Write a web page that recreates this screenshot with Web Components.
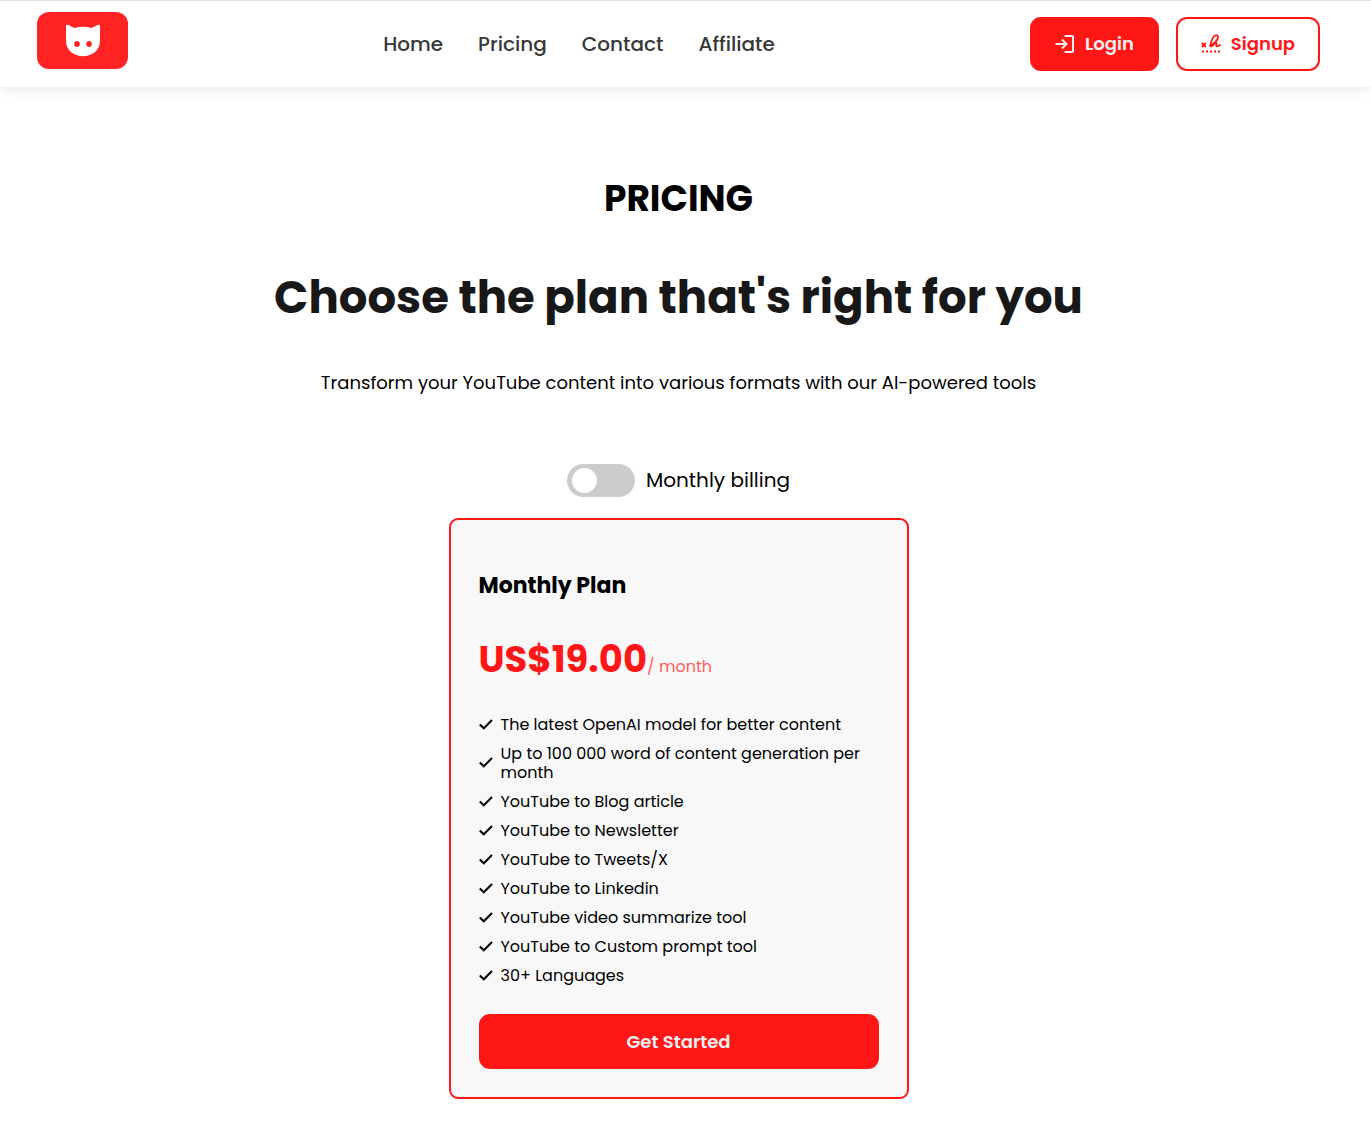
<!DOCTYPE html>
<html lang="en">
<head>
<meta charset="utf-8">
<title>Pricing</title>
<style>
  body {
    margin: 0;
    background: #fff;
    color: #000;
    font-family: Poppins, Inter, "Open Sans", sans-serif;
    --accent: #ff1717;
    --on-accent: #f0f0f0;
  }
</style>
</head>
<body>
<site-header>
  <nav-link href="#home">Home</nav-link>
  <nav-link href="#pricing">Pricing</nav-link>
  <nav-link href="#contact">Contact</nav-link>
  <nav-link href="#affiliate">Affiliate</nav-link>
  <action-button slot="actions" icon="login">Login</action-button>
  <action-button slot="actions" icon="sign" outline>Signup</action-button>
</site-header>
<pricing-section>
  <span slot="eyebrow">PRICING</span>
  <span slot="title">Choose the plan that's right for you</span>
  <span slot="lead">Transform your YouTube content into various formats with our AI-powered tools</span>
  <billing-toggle>Monthly billing</billing-toggle>
  <plan-card>
    <span slot="name">Monthly Plan</span>
    <span slot="price">US$19.00</span>
    <span slot="period">/ month</span>
    <plan-feature>The latest OpenAI model for better content</plan-feature>
    <plan-feature>Up to 100 000 word of content generation per month</plan-feature>
    <plan-feature>YouTube to Blog article</plan-feature>
    <plan-feature>YouTube to Newsletter</plan-feature>
    <plan-feature>YouTube to Tweets/X</plan-feature>
    <plan-feature>YouTube to Linkedin</plan-feature>
    <plan-feature>YouTube video summarize tool</plan-feature>
    <plan-feature>YouTube to Custom prompt tool</plan-feature>
    <plan-feature>30+ Languages</plan-feature>
    <action-button slot="action" block>Get Started</action-button>
  </plan-card>
</pricing-section>

<script>
  const define = (name, html) => customElements.define(name, class extends HTMLElement {
    constructor() {
      super();
      this.attachShadow({ mode: 'open' }).innerHTML = html;
    }
  });

  const icons = {
    login: '<svg width="20" height="20" viewBox="0 0 20 20" fill="none" stroke="currentColor" stroke-width="2" aria-hidden="true"><path d="M0.500 10h10.500M7 5.500l4.500 4.500L7 14.500"/><path d="M9.500 2h7.500q1 0 1 1v14q0 1-1 1H9.500"/></svg>',
    sign: '<svg width="20" height="20" viewBox="0 0 20 20" fill="none" stroke="currentColor" stroke-width="1.800" aria-hidden="true"><path d="M.8 9l4 4M4.800 9l-4 4"/><path d="M8 12C13 10.500 17.300 5.500 17 3C16.500 0 13 1 11.300 5C9.800 8.500 8.800 12 10.300 12.300C12 12.600 14 8.500 15.300 8.900C16.500 9.300 14.300 12.300 15.800 12.400C17 12.500 17.500 11.200 19.800 11.200"/><path d="M1 17.500h18" stroke-width="2" stroke-dasharray="2 2"/></svg>'
  };

  class ActionButton extends HTMLElement {
    constructor() {
      super();
      this.attachShadow({ mode: 'open' });
    }
    connectedCallback() {
      this.shadowRoot.innerHTML = `
        <style>
          :host { display: block; }
          button {
            box-sizing: border-box; display: flex; align-items: center; justify-content: center;
            gap: 10px; height: 54px; width: 100%; padding: 0 23px 1px; cursor: pointer;
            border: 2px solid var(--accent); border-radius: 11px;
            background: var(--accent); color: var(--on-accent);
            font: 600 18px/26px Poppins, Inter, "Open Sans", sans-serif; white-space: nowrap;
          }
          :host([outline]) button { background: #fff; color: var(--accent); }
          :host([block]) button { height: 55px; padding: 0; }
          svg { flex: none; }
        </style>
        <button type="button">${icons[this.getAttribute('icon')] || ''}<slot></slot></button>`;
    }
  }
  customElements.define('action-button', ActionButton);

  class NavLink extends HTMLElement {
    constructor() {
      super();
      this.attachShadow({ mode: 'open' });
    }
    connectedCallback() {
      this.shadowRoot.innerHTML = `
        <style>
          :host { display: block; }
          a { font-weight: 500; font-size: 20px; line-height: 30px; color: #383838; text-decoration: none; }
        </style>
        <a href="${this.getAttribute('href')}"><slot></slot></a>`;
    }
  }
  customElements.define('nav-link', NavLink);

  define('site-logo', `
    <style>
      :host { display: block; }
      a { display: flex; align-items: center; justify-content: center; width: 91px; height: 57px; border-radius: 12px; background: #ff2323; }
    </style>
    <a href="#home" aria-label="Home">
      <svg width="36" height="34" viewBox="0 0 36 34" aria-hidden="true">
        <path fill="#fff" d="M1 2Q1 .2 3 .8L9.500 4Q18 1.500 26.500 4L33 .8Q35 .2 35 2V16.500C35 26 27.500 32.200 18 32.200S1 26 1 16.500Z"/>
        <ellipse cx="12" cy="20" rx="2.800" ry="3" fill="#ff2323"/>
        <ellipse cx="24" cy="20" rx="2.800" ry="3" fill="#ff2323"/>
      </svg>
    </a>`);

  define('site-header', `
    <style>
      :host { display: block; }
      header {
        display: flex; align-items: center; justify-content: space-between;
        box-sizing: border-box; height: 87px; padding: 0 51px 7px 37px;
        border-top: 1px solid #e0e0e0; background: #fff; box-shadow: 0 2px 12px rgba(0, 0, 0, .1);
      }
      nav { display: flex; gap: 35px; padding-top: 7px; }
      .actions { display: flex; gap: 17px; padding-top: 7px; }
    </style>
    <header>
      <site-logo></site-logo>
      <nav><slot></slot></nav>
      <div class="actions"><slot name="actions"></slot></div>
    </header>`);

  define('pricing-section', `
    <style>
      :host { display: block; }
      main { display: flex; flex-direction: column; align-items: center; padding: 85px 14px 37px 0; text-align: center; }
      h1, h2, p { margin: 0; }
      h2 { font-size: 36px; line-height: 54px; font-weight: 700; }
      h1 { margin-top: 36px; font-size: 45px; line-height: 72px; font-weight: 700; color: #181818; }
      p { margin: 35px 0 68px; font-size: 18px; line-height: 27px; }
    </style>
    <main>
      <h2><slot name="eyebrow"></slot></h2>
      <h1><slot name="title"></slot></h1>
      <p><slot name="lead"></slot></p>
      <slot></slot>
    </main>`);

  define('billing-toggle', `
    <style>
      :host { display: block; }
      label { display: flex; align-items: center; gap: 11px; height: 33px; font-size: 20px; line-height: 27px; cursor: pointer; }
      input {
        appearance: none; display: flex; align-items: center; box-sizing: border-box;
        width: 68px; height: 33px; margin: 0; padding: 0 5px; border-radius: 17px; background: #ccc; cursor: pointer;
      }
      input::before { content: ""; width: 25px; height: 25px; border-radius: 50%; background: #fff; }
      input:checked { justify-content: flex-end; background: var(--accent); }
    </style>
    <label><input type="checkbox" role="switch"><span><slot></slot></span></label>`);

  define('plan-card', `
    <style>
      :host { display: block; width: 100%; max-width: 460px; margin-top: 21px; text-align: left; }
      article { box-sizing: border-box; padding: 48px 28px 28px; border: 2px solid var(--accent); border-radius: 9px; background: #f8f8f8; }
      h3 { margin: 0; font-size: 22px; line-height: 36px; font-weight: 700; }
      .price { display: flex; align-items: baseline; margin: 28px 0 21px; color: var(--accent); line-height: 54px; }
      .amount { font-size: 37px; font-weight: 700; }
      .period { font-size: 16px; opacity: .7; }
      .features { display: flex; flex-direction: column; gap: 10px; margin-bottom: 29px; }
    </style>
    <article>
      <h3><slot name="name"></slot></h3>
      <div class="price"><span class="amount"><slot name="price"></slot></span><span class="period"><slot name="period"></slot></span></div>
      <div class="features" role="list"><slot></slot></div>
      <slot name="action"></slot>
    </article>`);

  define('plan-feature', `
    <style>
      :host { display: flex; align-items: center; gap: 8px; font-size: 16px; line-height: 19px; }
      svg { flex: none; }
    </style>
    <svg width="14" height="14" viewBox="0 0 14 14" fill="none" stroke="currentColor" stroke-width="2" aria-hidden="true"><path d="M.8 6.500l4 3.800L13 2"/></svg>
    <span role="listitem"><slot></slot></span>`);
</script>
</body>
</html>
